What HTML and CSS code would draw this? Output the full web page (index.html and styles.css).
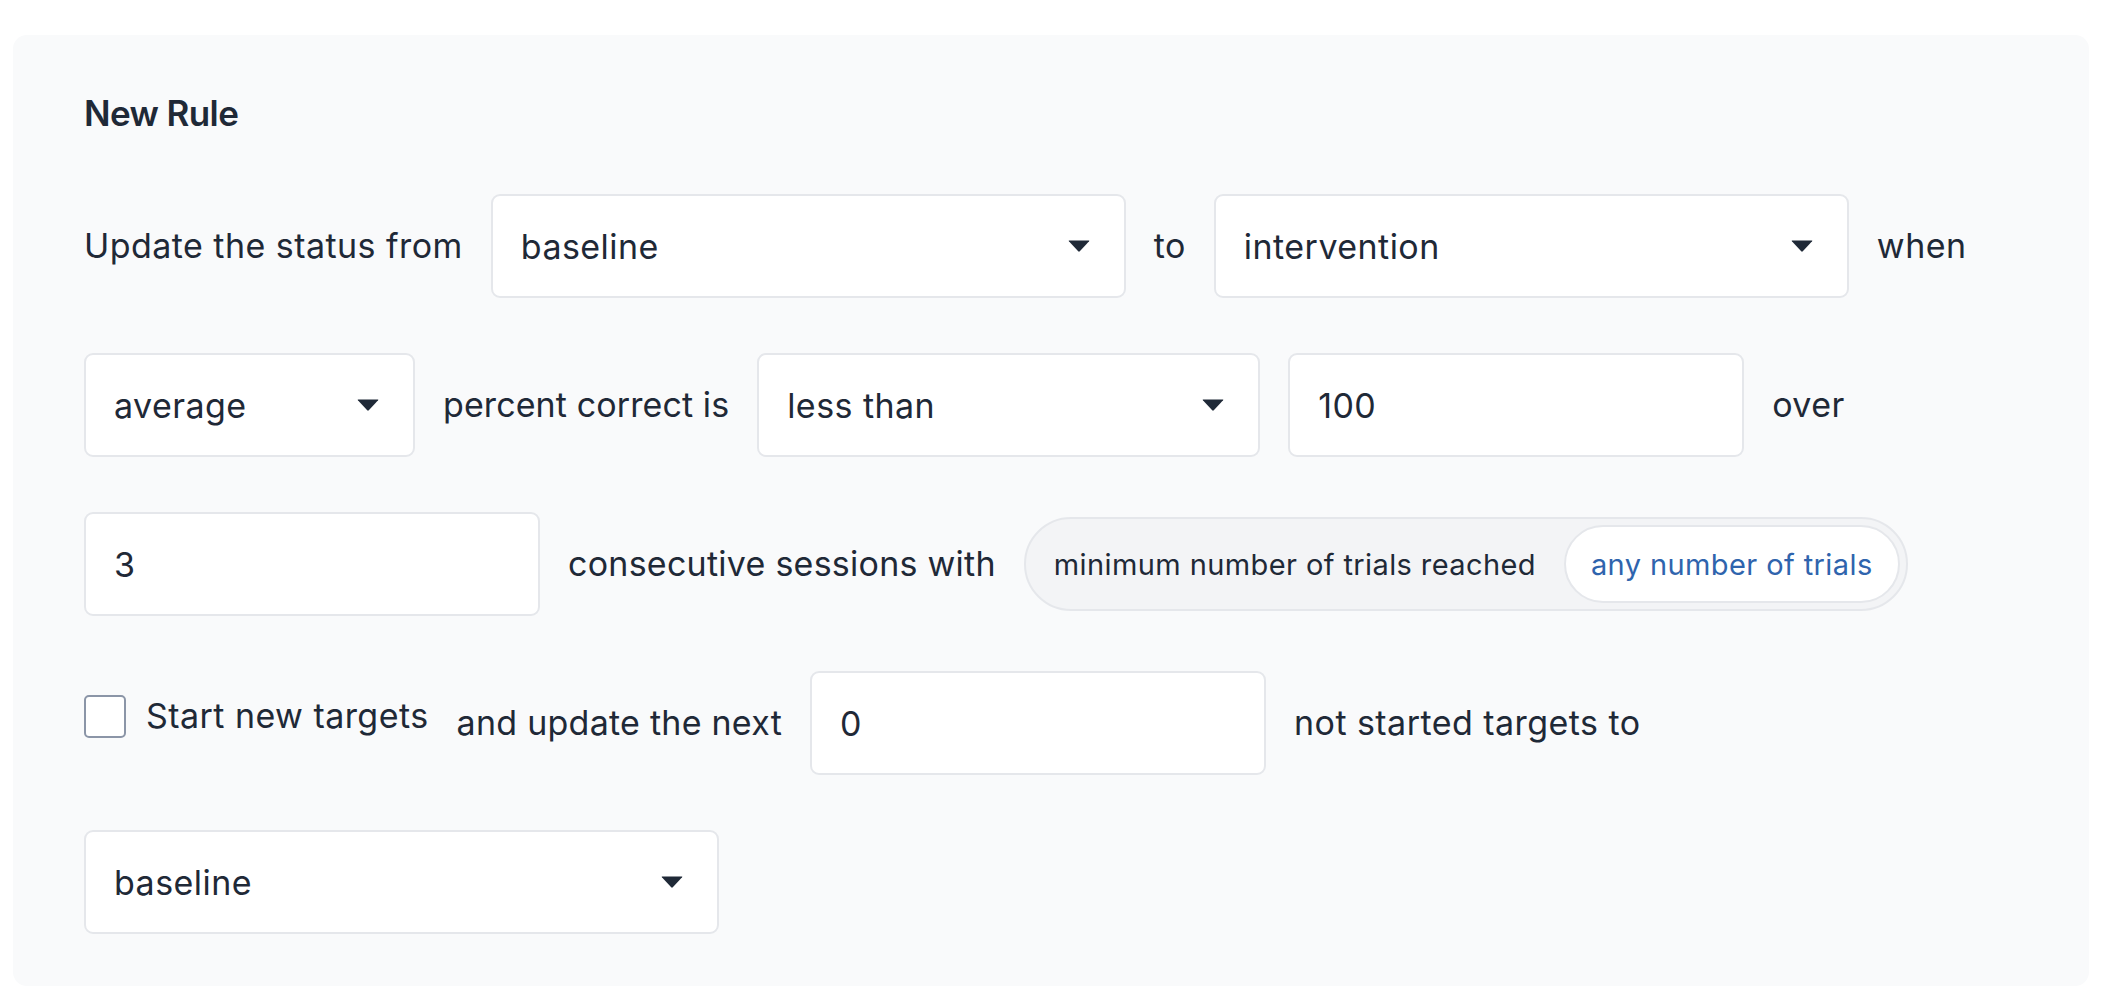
FILE: index.html
```html
<!DOCTYPE html>
<html lang="en">
<head>
<meta charset="utf-8">
<title>New Rule</title>
<link rel="stylesheet" href="styles.css">
</head>
<body>
<div class="panel">
  <h2 class="title">New Rule</h2>

  <div class="row">
    <span class="label">Update the status from</span>
    <div class="select w-wide">
      <span>baseline</span>
      <svg class="caret" viewBox="0 0 22 12" width="22" height="12"><path d="M1.2 0.5 H20.8 Q21.8 0.5 21.1 1.3 L11.8 11.3 Q11 12 10.2 11.3 L0.9 1.3 Q0.2 0.5 1.2 0.5 Z"/></svg>
    </div>
    <span class="label">to</span>
    <div class="select w-wide">
      <span>intervention</span>
      <svg class="caret" viewBox="0 0 22 12" width="22" height="12"><path d="M1.2 0.5 H20.8 Q21.8 0.5 21.1 1.3 L11.8 11.3 Q11 12 10.2 11.3 L0.9 1.3 Q0.2 0.5 1.2 0.5 Z"/></svg>
    </div>
    <span class="label">when</span>
  </div>

  <div class="row">
    <div class="select w-small">
      <span>average</span>
      <svg class="caret" viewBox="0 0 22 12" width="22" height="12"><path d="M1.2 0.5 H20.8 Q21.8 0.5 21.1 1.3 L11.8 11.3 Q11 12 10.2 11.3 L0.9 1.3 Q0.2 0.5 1.2 0.5 Z"/></svg>
    </div>
    <span class="label label-tight">percent correct is</span>
    <div class="select w-mid">
      <span>less than</span>
      <svg class="caret" viewBox="0 0 22 12" width="22" height="12"><path d="M1.2 0.5 H20.8 Q21.8 0.5 21.1 1.3 L11.8 11.3 Q11 12 10.2 11.3 L0.9 1.3 Q0.2 0.5 1.2 0.5 Z"/></svg>
    </div>
    <div class="input w-input">100</div>
    <span class="label">over</span>
  </div>

  <div class="row">
    <div class="input w-input">3</div>
    <span class="label label-mid">consecutive sessions with</span>
    <div class="toggle">
      <span class="seg">minimum number of trials reached</span>
      <span class="seg seg-on">any number of trials</span>
    </div>
  </div>

  <div class="row">
    <label class="check">
      <span class="box"></span>
      <span class="check-text">Start new targets</span>
    </label>
    <span class="label label-mid">and update the next</span>
    <div class="input w-input">0</div>
    <span class="label">not started targets to</span>
  </div>

  <div class="row">
    <div class="select w-wide">
      <span>baseline</span>
      <svg class="caret" viewBox="0 0 22 12" width="22" height="12"><path d="M1.2 0.5 H20.8 Q21.8 0.5 21.1 1.3 L11.8 11.3 Q11 12 10.2 11.3 L0.9 1.3 Q0.2 0.5 1.2 0.5 Z"/></svg>
    </div>
  </div>
</div>
</body>
</html>
```

FILE: styles.css
```css
* { box-sizing: border-box; }

html, body {
  margin: 0;
  padding: 0;
  background: #ffffff;
}

body {
  font-family: Inter, "Noto Sans", "Liberation Sans", sans-serif;
  color: #1f2937;
  padding: 35px 29px 13px 13px;
}

.panel {
  background: #f9fafb;
  border-radius: 14px;
  padding: 56px 71px 52px 71px;
  display: flex;
  flex-direction: column;
  gap: 55px;
}

.title {
  margin: 0 0 4px 0;
  font-size: 35px;
  line-height: 44px;
  font-weight: 600;
  letter-spacing: -0.6px;
  color: #1f2937;
}

.row {
  display: flex;
  align-items: center;
  gap: 28px;
  min-height: 104px;
}

.label {
  font-size: 34px;
  line-height: 44px;
  letter-spacing: 0.45px;
  white-space: nowrap;
}

.label-tight { letter-spacing: 0.1px; }
.label-mid { letter-spacing: 0.25px; }

.select, .input {
  height: 104px;
  background: #ffffff;
  border: 2px solid #e5e7eb;
  border-radius: 9px;
  display: flex;
  align-items: center;
  font-size: 34px;
  letter-spacing: 0.45px;
  padding: 0 34px 0 28px;
  white-space: nowrap;
}

.select {
  justify-content: space-between;
}

.caret {
  fill: #1f2937;
  flex: none;
}

.w-wide { width: 635px; }
.w-small { width: 331px; }
.w-mid { width: 503px; }
.w-input { width: 456px; }

.toggle {
  display: flex;
  align-items: center;
  gap: 4px;
  height: 94px;
  padding: 6px;
  background: #f3f4f6;
  border: 2px solid #e5e7eb;
  border-radius: 47px;
}

.seg {
  height: 78px;
  display: flex;
  align-items: center;
  padding: 0 24px 0 22px;
  font-size: 29px;
  letter-spacing: 0.4px;
  white-space: nowrap;
  color: #1f2937;
  border-radius: 39px;
}

.seg-on {
  background: #ffffff;
  border: 2px solid #e5e7eb;
  color: #2f64ad;
  padding: 0 25px;
}

.check {
  display: flex;
  align-items: center;
  gap: 20px;
  margin-top: -14px;
}

.box {
  width: 42px;
  height: 43px;
  border: 2px solid #8b95a7;
  border-radius: 5px;
  background: #ffffff;
  flex: none;
}

.check-text {
  font-size: 34px;
  line-height: 44px;
  letter-spacing: 0.45px;
  white-space: nowrap;
}
```
